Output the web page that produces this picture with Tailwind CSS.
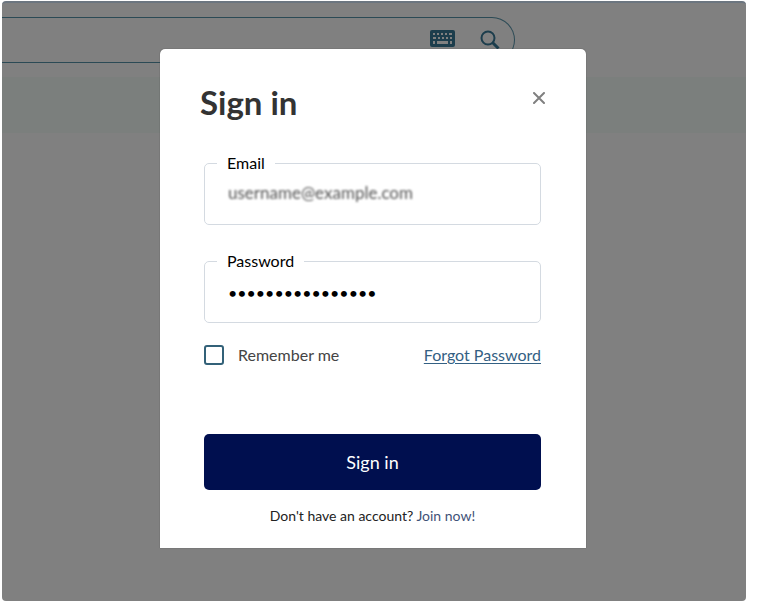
<!DOCTYPE html>
<html lang="en">
<head>
    <meta charset="UTF-8">
    <meta name="viewport" content="width=device-width, initial-scale=1.0">
    <title>Sign in</title>
    <script src="https://cdn.jsdelivr.net/npm/@tailwindcss/browser@4"></script>
</head>
<body class="bg-white font-['Lato',sans-serif]">
    <div class="flex min-h-screen pl-[2px] pt-px pr-3 pb-[2px]">
        <div class="relative flex-1 overflow-hidden rounded-sm border-t-2 border-[#6c7680] bg-[#808080]">

            <!-- Dimmed page behind the modal -->
            <div class="pt-[14px]">
                <div class="flex h-[46px] w-[69%] items-center justify-end gap-6 rounded-r-full border border-l-0 border-[#2b4a55] pr-[14px]">
                    <button type="button" aria-label="Keyboard" class="-mt-1">
                        <svg width="26" height="17" viewBox="0 0 26 17">
                            <rect width="25" height="17" rx="2" fill="#1c3d4c" />
                            <path d="M3 3h2v2H3zM7 3h2v2H7zM11 3h2v2h-2zM15 3h2v2h-2zM19 3h3v2h-3zM3 7h3v2H3zM8 7h2v2H8zM12 7h2v2h-2zM16 7h2v2h-2zM20 7h2v2h-2zM3 11h2v3H3zM7 11h11v3H7zM20 11h2v3h-2z" fill="#808080" />
                        </svg>
                    </button>
                    <button type="button" aria-label="Search">
                        <svg width="20" height="20" viewBox="0 0 20 20" fill="none" stroke="#1c3d4c">
                            <circle cx="8" cy="8" r="6.5" stroke-width="2" />
                            <path d="M12.5 12.5L18.5 18.5" stroke-width="3" />
                        </svg>
                    </button>
                </div>
                <div class="mt-[14px] h-14 bg-[#7b7f7d]"></div>
            </div>

            <!-- Modal -->
            <div class="absolute inset-x-0 top-[46px] flex justify-center pr-[2px]">
                <div role="dialog" aria-labelledby="title" class="w-full max-w-[426px] rounded-t-[5px] bg-white pt-8 pr-[45px] pb-[22px] pl-11 shadow-[0_0_1px_#333]">
                    <div class="-ml-1 flex items-start justify-between">
                        <h1 id="title" class="text-[33px] leading-[42px] font-bold text-[#333]">Sign in</h1>
                        <button type="button" aria-label="Close" class="-mr-1 pt-[11px]">
                            <svg width="12" height="12" viewBox="0 0 12 12" stroke="#808080" stroke-width="2" stroke-linecap="round">
                                <path d="M1 1l10 10M11 1L1 11" />
                            </svg>
                        </button>
                    </div>

                    <form class="mt-8">
                        <fieldset class="h-[70px] rounded-[5px] border border-[#d4dae1] px-3">
                            <legend class="px-[10px] text-base leading-4 text-black"><label for="email">Email</label></legend>
                            <input id="email" type="text" value="username@example.com" class="mt-2 w-full px-[11px] text-[17px] leading-7 text-[#555] blur-[1px] outline-none">
                        </fieldset>

                        <fieldset class="mt-7 h-[70px] rounded-[5px] border border-[#d4dae1] px-3">
                            <legend class="px-[10px] text-base leading-4 text-black"><label for="password">Password</label></legend>
                            <input id="password" type="password" value="passwordpassword" class="mt-2 w-full px-[11px] text-base leading-8 text-black outline-none">
                        </fieldset>

                        <div class="mt-5 flex items-center justify-between text-base leading-6">
                            <label class="flex items-center gap-[14px] text-[#444]">
                                <input type="checkbox" class="size-5 appearance-none rounded-[3px] border-2 border-[#336178]">
                                Remember me
                            </label>
                            <a href="#" class="text-[#336083] underline underline-offset-2">Forgot Password</a>
                        </div>

                        <button type="submit" class="mt-[67px] h-14 w-full rounded-[5px] bg-[#000f4f] text-lg text-white">Sign in</button>
                    </form>

                    <p class="mt-4 text-center text-sm leading-5 text-[#222]">Don't have an account? <a href="#" class="text-[#3f5278]">Join now!</a></p>
                </div>
            </div>
        </div>
    </div>
</body>
</html>
